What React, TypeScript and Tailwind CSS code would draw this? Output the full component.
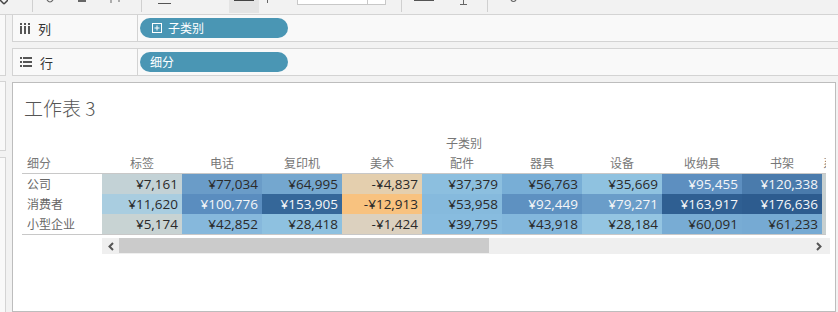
import React from "react";

const cols = ["标签", "电话", "复印机", "美术", "配件", "器具", "设备", "收纳具", "书架"];

type Cell = { v: number; bg: string; light?: boolean };

const rows: { name: string; cells: Cell[] }[] = [
  {
    name: "公司",
    cells: [
      { v: 7161, bg: "bg-[#c3d2d6]" },
      { v: 77034, bg: "bg-[#6a9cc8]" },
      { v: 64995, bg: "bg-[#74a7cf]" },
      { v: -4837, bg: "bg-[#e4cfae]" },
      { v: 37379, bg: "bg-[#8cbfdf]" },
      { v: 56763, bg: "bg-[#78aed6]" },
      { v: 35669, bg: "bg-[#8fc2e0]" },
      { v: 95455, bg: "bg-[#5d8fc0]", light: true },
      { v: 120338, bg: "bg-[#4a7bac]", light: true },
    ],
  },
  {
    name: "消费者",
    cells: [
      { v: 11620, bg: "bg-[#a9cde0]" },
      { v: 100776, bg: "bg-[#5a8dbf]", light: true },
      { v: 153905, bg: "bg-[#356799]", light: true },
      { v: -12913, bg: "bg-[#f8c27f]" },
      { v: 53958, bg: "bg-[#86badd]" },
      { v: 92449, bg: "bg-[#5e91c1]", light: true },
      { v: 79271, bg: "bg-[#6a9dc9]", light: true },
      { v: 163917, bg: "bg-[#2f5f92]", light: true },
      { v: 176636, bg: "bg-[#2d5c8f]", light: true },
    ],
  },
  {
    name: "小型企业",
    cells: [
      { v: 5174, bg: "bg-[#c8d3d3]" },
      { v: 42852, bg: "bg-[#86b8dc]" },
      { v: 28418, bg: "bg-[#8ec1e0]" },
      { v: -1424, bg: "bg-[#dcd1bf]" },
      { v: 39795, bg: "bg-[#88bcdf]" },
      { v: 43918, bg: "bg-[#83b7dc]" },
      { v: 28184, bg: "bg-[#94c5e2]" },
      { v: 60091, bg: "bg-[#78acd4]" },
      { v: 61233, bg: "bg-[#76aad3]" },
    ],
  },
];

function fmt(v: number) {
  return (v < 0 ? "-" : "") + "¥" + Math.abs(v).toLocaleString("en-US");
}

function Sep({ ml }: { ml: string }) {
  return <div className={`${ml} w-px h-[12px] bg-[#d0d0d0]`} />;
}

function Toolbar() {
  return (
    <div className="h-[15px] shrink-0 border-b border-[#d4d4d4] bg-[#f2f2f2] flex items-start">
      <svg width="8" height="5" viewBox="0 0 8 5">
        <path d="M0 0 L4 4 M8 0 L4 4" stroke="#444" strokeWidth="1.5" />
      </svg>
      <Sep ml="ml-[24px]" />
      <svg className="ml-[12px]" width="10" height="4" viewBox="0 0 10 4">
        <path d="M2 0 Q5 4 8 0" stroke="#666" strokeWidth="1.2" fill="none" />
      </svg>
      <div className="ml-[23px] w-[8px] h-[2px] bg-[#666]" />
      <svg className="ml-[24px]" width="10" height="3" viewBox="0 0 10 3">
        <path d="M1 0 V3 M9 0 V2" stroke="#666" strokeWidth="1" />
      </svg>
      <Sep ml="ml-[21px]" />
      <div className="ml-[16px] mt-[3px] w-[13px] h-[1px] bg-[#555]" />
      <div className="ml-[58px] w-[30px] h-[13px] bg-[#e4e4e4] flex justify-center">
        <div className="w-[20px] h-[1px] bg-[#444]" />
      </div>
      <div className="ml-[8px] w-[1px] h-[3px] bg-[#666]" />
      <div className="ml-[29px] w-[89px] h-[5px] border-x border-b border-[#c8c8c8] bg-white flex justify-end">
        <div className="w-[18px] h-full border-l border-[#c8c8c8]" />
      </div>
      <Sep ml="ml-[15px]" />
      <div className="ml-[12px] w-[20px] h-[1px] bg-[#555]" />
      <svg className="ml-[25px]" width="9" height="5" viewBox="0 0 9 5">
        <path d="M4.5 0 V4.5 M1 4.5 H8" stroke="#666" strokeWidth="1" />
      </svg>
      <Sep ml="ml-[19px]" />
      <svg className="ml-[22px]" width="7" height="3" viewBox="0 0 7 3">
        <path d="M1 0 Q3.5 3 6 0" stroke="#666" strokeWidth="1.2" fill="none" />
      </svg>
    </div>
  );
}

function ColIcon() {
  return (
    <svg width="10" height="11" viewBox="0 0 10 11">
      <rect x="0" y="0" width="2" height="2" fill="#555" />
      <rect x="4" y="0" width="2" height="2" fill="#555" />
      <rect x="8" y="0" width="2" height="2" fill="#555" />
      <rect x="0" y="3" width="2" height="8" fill="#555" />
      <rect x="4" y="3" width="2" height="8" fill="#555" />
      <rect x="8" y="3" width="2" height="8" fill="#555" />
    </svg>
  );
}

function RowIcon() {
  return (
    <svg width="12" height="10" viewBox="0 0 12 10">
      <rect x="0" y="0" width="2" height="2" fill="#555" />
      <rect x="0" y="4" width="2" height="2" fill="#555" />
      <rect x="0" y="8" width="2" height="2" fill="#555" />
      <rect x="3" y="0" width="9" height="2" fill="#555" />
      <rect x="3" y="4" width="9" height="2" fill="#555" />
      <rect x="3" y="8" width="9" height="2" fill="#555" />
    </svg>
  );
}

function Shelf({
  icon,
  label,
  pill,
  expand,
  cls,
}: {
  icon: React.ReactNode;
  label: string;
  pill: string;
  expand?: boolean;
  cls: string;
}) {
  return (
    <div className={`${cls} shrink-0 flex items-stretch bg-[#f9f9f9] border-l border-[#d3d3d3]`}>
      <div className="w-[125px] border-r border-[#d3d3d3] flex items-center pl-[7px] gap-[8px]">
        {icon}
        <span className="text-[13px] text-[#333] leading-none">{label}</span>
      </div>
      <div className="flex items-center pl-[2px]">
        <div className="w-[148px] h-[20px] rounded-full bg-[#4a96b4] flex items-center text-white text-[12px] leading-none">
          {expand ? (
            <>
              <svg className="ml-[12px]" width="10" height="10" viewBox="0 0 10 10">
                <rect x="0.5" y="0.5" width="9" height="9" fill="none" stroke="#fff" />
                <path d="M2.5 5 H7.5 M5 2.5 V7.5" stroke="#fff" />
              </svg>
              <span className="ml-[6px]">{pill}</span>
            </>
          ) : (
            <span className="ml-[10px]">{pill}</span>
          )}
        </div>
      </div>
    </div>
  );
}

function Chevron({ dir }: { dir: "l" | "r" }) {
  return (
    <svg width="6" height="9" viewBox="0 0 6 9">
      <path
        d={dir === "l" ? "M5 1 L1.5 4.5 L5 8" : "M1 1 L4.5 4.5 L1 8"}
        stroke="#555"
        strokeWidth="2"
        fill="none"
      />
    </svg>
  );
}

function Sheet() {
  return (
    <div className="flex-1 mr-[2px] border border-[#bdbdbd] bg-white flex flex-col min-h-0">
      <div className="h-[50px] shrink-0 pl-[11px] pt-[15px]">
        <div className="text-[19px] leading-[19px] text-[#555] font-light">工作表 3</div>
      </div>
      <div className="ml-[9px] w-[804px] overflow-hidden text-[12px] text-[#777]">
        <div className="h-[20px] flex items-center">
          <div className="w-[80px] shrink-0" />
          <div className="w-[724px] text-center">子类别</div>
        </div>
        <div className="h-[20px] grid grid-cols-[80px_repeat(9,80px)_4px] items-center">
          <div className="pl-[5px]">细分</div>
          {cols.map((c) => (
            <div key={c} className="text-center">
              {c}
            </div>
          ))}
          <div className="overflow-hidden whitespace-nowrap pl-px">系固件</div>
        </div>
        <div className="border-y border-[#c8c8c8]">
          {rows.map((r) => (
            <div key={r.name} className="h-[20px] grid grid-cols-[80px_repeat(9,80px)_4px]">
              <div className="pl-[5px] flex items-center text-[#666]">{r.name}</div>
              {r.cells.map((c, i) => (
                <div
                  key={i}
                  className={`${c.bg} flex items-center justify-end pr-[4px] font-['Open_Sans',sans-serif] text-[13.5px] ${
                    c.light ? "text-[#f4f6f8]" : "text-[#2a2a2a]"
                  }`}
                >
                  {fmt(c.v)}
                </div>
              ))}
              <div className="bg-[#c8d0d0]" />
            </div>
          ))}
        </div>
      </div>
      <div className="ml-[89px] mt-[3px] w-[728px] h-[16px] bg-[#efefef] flex items-start">
        <div className="w-[17px] h-[16px] flex items-center justify-center">
          <Chevron dir="l" />
        </div>
        <div className="w-[370px] h-[15px] bg-[#cbcbcb]" />
        <div className="flex-1" />
        <div className="w-[14px] h-[16px] flex items-center justify-start">
          <Chevron dir="r" />
        </div>
      </div>
    </div>
  );
}

export default function App() {
  return (
    <div className="w-[838px] h-[312px] overflow-hidden bg-[#f2f2f2] flex flex-col font-['Noto_Sans_CJK_SC',sans-serif]">
      <Toolbar />
      <div className="flex flex-1 min-h-0">
        <div className="w-[12px] shrink-0 flex flex-col">
          <div className="w-[6px] h-[61px] bg-[#f9f9f9] border-r border-b border-[#d4d4d4]" />
          <div className="w-[6px] h-[70px] mt-[5px] bg-[#f9f9f9] border-r border-y border-[#d4d4d4]" />
          <div className="w-[6px] flex-1 mt-[6px] bg-[#f9f9f9] border-r border-t border-[#d4d4d4]" />
        </div>
        <div className="flex-1 flex flex-col min-w-0">
          <Shelf cls="h-[27px] border-b" icon={<ColIcon />} label="列" pill="子类别" expand />
          <div className="h-[6px] shrink-0" />
          <Shelf cls="h-[28px] border-y" icon={<RowIcon />} label="行" pill="细分" />
          <div className="h-[6px] shrink-0" />
          <Sheet />
        </div>
      </div>
    </div>
  );
}
